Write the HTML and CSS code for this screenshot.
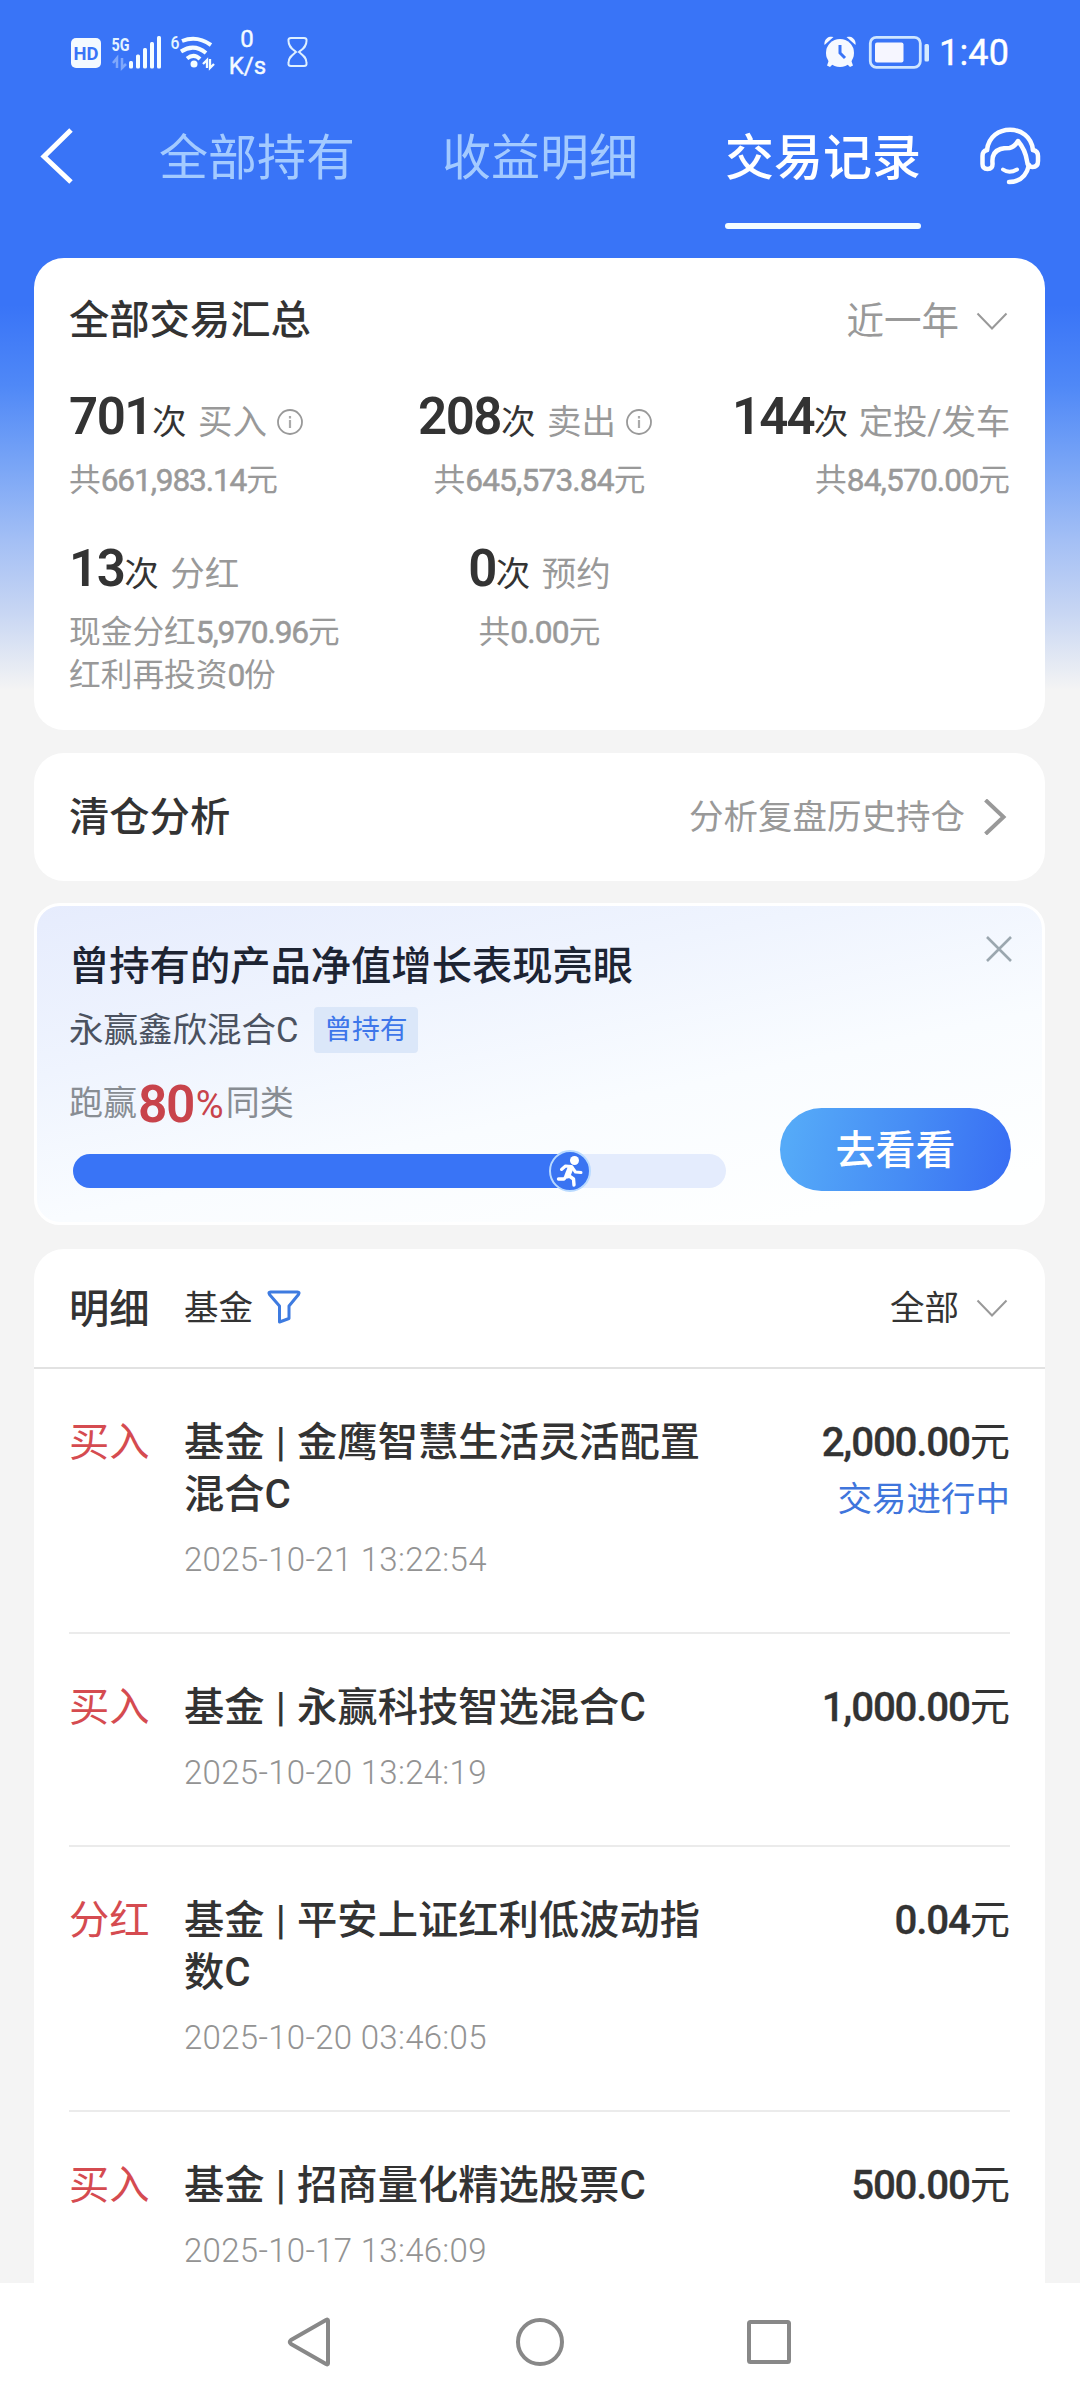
FILE: index.html
```html
<!DOCTYPE html>
<html lang="zh-CN">
<head>
<meta charset="utf-8">
<title>交易记录</title>
<link rel="stylesheet" href="styles.css">
</head>
<body>
<div class="screen">
  <header class="statusbar">
    <svg class="sb-left" viewBox="64 20 256 64" width="256" height="64">
      <rect x="71" y="38" width="30" height="30" rx="5" fill="#f4faff"/>
      <text x="86" y="60" class="t-hd" text-anchor="middle" textLength="25" lengthAdjust="spacingAndGlyphs">HD</text>
      <text x="111.500" y="51" class="t-5g" textLength="18" lengthAdjust="spacingAndGlyphs">5G</text>
      <path d="M113 63l4-5v10M122 58v10l4-4" fill="none" stroke="#7fa8fb" stroke-width="2.500"/>
      <g fill="#f4fdff">
        <rect x="129" y="61" width="4" height="7.500" rx="1.500"/>
        <rect x="136" y="54.500" width="4" height="14" rx="1.500"/>
        <rect x="143" y="48" width="4" height="20.500" rx="1.500"/>
        <rect x="150" y="42" width="4" height="26.500" rx="1.500"/>
        <rect x="157" y="36" width="4" height="32.500" rx="1.500"/>
      </g>
      <text x="170.500" y="49" class="t-6" textLength="9" lengthAdjust="spacingAndGlyphs">6</text>
      <g fill="none" stroke="#f4fdff" stroke-width="4">
        <path d="M182 41Q197 35 211 45"/>
        <path d="M181 51.500Q194 43 206 53"/>
        <path d="M187 58.500Q194 53 200 59"/>
        <path d="M203 64l4-4v8M210 59v9l4-4" stroke-width="2.300"/>
      </g>
      <circle cx="194" cy="64" r="3.500" fill="#f4fdff"/>
      <text x="247" y="47" class="t-net" text-anchor="middle">0</text>
      <text x="247.500" y="73.500" class="t-net" text-anchor="middle">K/s</text>
      <path d="M291 38h13q3 0 2.500 3c0 6-4 8-7.500 11 3.500 3 7.500 5 7.500 11q.5 3-2.500 3h-13q-3 0-2.500-3c0-6 4-8 7.500-11-3.500-3-7.500-5-7.500-11q-.5-3 2.500-3z" fill="none" stroke="#dff0ff" stroke-width="2"/>
    </svg>
    <svg class="sb-right" viewBox="820 20 192 64" width="192" height="64">
      <g fill="#f6f9ff">
        <circle cx="840" cy="53" r="14"/>
        <path d="M824.500 45a7 7 0 0 1 9-8z M855.500 45a7 7 0 0 0-9-8z"/>
        <path d="M829 60l5 3-4 4-3-1.500z M851 60l-5 3 4 4 3-1.500z"/>
      </g>
      <path d="M840 45v8l5 5" fill="none" stroke="#3974f7" stroke-width="3"/>
      <rect x="870.300" y="37.300" width="50" height="30" rx="6" fill="none" stroke="#cfe6ff" stroke-width="2.800"/>
      <rect x="875" y="42.500" width="28.500" height="20" rx="2" fill="#f6f6ff"/>
      <rect x="924.500" y="44" width="4.500" height="17.500" rx="1.500" fill="#d5eaff"/>
      <text x="939" y="65" class="t-clock" textLength="70">1:40</text>
    </svg>
  </header>

  <nav class="tabs">
    <svg class="back" viewBox="0 0 34 56" width="34" height="56"><path d="M31 2L4 28.500 31 54" fill="none" stroke="#fff" stroke-width="5"/></svg>
    <a class="tab">全部持有</a>
    <a class="tab">收益明细</a>
    <a class="tab active">交易记录</a>
    <svg class="service" viewBox="980 126 62 60" width="62" height="60">
      <g fill="none" stroke="#fbfdff" stroke-width="4.500" stroke-linecap="round" stroke-linejoin="round">
        <path d="M988 150C991 123 1031 123 1034 150"/>
        <path d="M988 150q-4.500 1-4.500 6v8q0 5 5 5 5.500 0 5-6-1-11 8-14 3-1 9-1 5-1 8.500-7 7.500 9 9 20 .5 6 5.500 6 5.500 0 5.500-6v-5q0-5-5-6"/>
        <path d="M1030 165Q1026 182 1010 182"/>
        <path d="M1004 169.500q6 4.500 14 0" stroke-width="4"/>
      </g>
    </svg>
  </nav>

  <main class="content">
    <section class="card summary">
      <div class="card-head">
        <h2>全部交易汇总</h2>
        <div class="range">近一年<svg class="chev" viewBox="0 0 32 20" width="32" height="20"><path d="M1.500 1.500L16 16.500 30.500 1.500" fill="none" stroke="#999" stroke-width="2"/></svg></div>
      </div>
      <div class="stats">
        <div class="stat">
          <p class="main"><b>701</b><i>次</i><span>买入</span><svg class="info" viewBox="0 0 26 26" width="26" height="26"><circle cx="13" cy="13" r="12" fill="none" stroke="#999" stroke-width="1.800"/><path d="M13 11v8M13 7v2.500" stroke="#aaa" stroke-width="2.200"/></svg></p>
          <p class="sub">共<b>661,983.14</b>元</p>
        </div>
        <div class="stat center">
          <p class="main"><b>208</b><i>次</i><span>卖出</span><svg class="info pad" viewBox="0 0 26 26" width="26" height="26"><circle cx="13" cy="13" r="12" fill="none" stroke="#999" stroke-width="1.800"/><path d="M13 11v8M13 7v2.500" stroke="#aaa" stroke-width="2.200"/></svg></p>
          <p class="sub">共<b>645,573.84</b>元</p>
        </div>
        <div class="stat right">
          <p class="main"><b>144</b><i>次</i><span>定投/发车</span></p>
          <p class="sub">共<b>84,570.00</b>元</p>
        </div>
        <div class="stat">
          <p class="main"><b>13</b><i>次</i><span>分红</span></p>
          <p class="sub">现金分红<b>5,970.96</b>元</p>
          <p class="sub next">红利再投资<b>0</b>份</p>
        </div>
        <div class="stat center">
          <p class="main"><b>0</b><i>次</i><span>预约</span></p>
          <p class="sub">共<b>0.00</b>元</p>
        </div>
      </div>
    </section>

    <section class="card analysis">
      <h2>清仓分析</h2>
      <div class="link">分析复盘历史持仓<svg viewBox="0 0 24 36" width="24" height="36"><path d="M2.500 1L20.500 18 2.500 35" fill="none" stroke="#999" stroke-width="4"/></svg></div>
    </section>

    <section class="card promo">
      <div class="promo-top">
        <h2>曾持有的产品净值增长表现亮眼</h2>
        <svg class="close" viewBox="0 0 26 26" width="26" height="26"><path d="M1 1l24 24M25 1L1 25" stroke="#9ba7af" stroke-width="2.600"/></svg>
      </div>
      <div class="fund"><span>永赢鑫欣混合C</span><em>曾持有</em></div>
      <div class="promo-body">
        <div class="rank">
          <p>跑赢<b>80</b><i>%</i>同类</p>
          <div class="track">
            <div class="fill" style="width:76%"></div>
            <svg class="runner" viewBox="0 0 42 42" width="42" height="42">
              <circle cx="21" cy="21" r="20" fill="#3a74f2" stroke="#b9daff" stroke-width="2"/>
              <circle cx="25.500" cy="10.500" r="4.500" fill="#fff"/>
              <g fill="none" stroke="#fff" stroke-linecap="round" stroke-linejoin="round"><path d="M12.500 19.500l4-3.500 6 .5 4 5.500 5.500.5" stroke-width="3"/><path d="M21.500 18l-3 7.500" stroke-width="6"/><path d="M18 25.500l-3 3.500H9.500M19.500 25.500l5 3.500 .5 6" stroke-width="3.400"/></g>
            </svg>
          </div>
        </div>
        <a class="go">去看看</a>
      </div>
    </section>

    <section class="card detail">
      <div class="detail-head">
        <h2>明细</h2>
        <span class="type">基金</span>
        <svg class="filter" viewBox="0 0 34 34" width="34" height="34"><path d="M3.500 2h27q2.500 0 1 2.500L22 16v12.500L12.500 32V16L2.500 4.500Q1 2 3.500 2z" fill="none" stroke="#3e7be0" stroke-width="3" stroke-linejoin="round"/></svg>
        <div class="all"><span>全部</span><svg class="chev" viewBox="0 0 32 20" width="32" height="20"><path d="M1.500 1.500L16 16.500 30.500 1.500" fill="none" stroke="#999" stroke-width="2"/></svg></div>
      </div>
      <ul class="list">
        <li>
          <span class="kind">买入</span>
          <div class="info-col"><p class="name">基金 | 金鹰智慧生活灵活配置混合C</p><p class="date">2025-10-21 13:22:54</p></div>
          <div class="money"><p class="amt"><b>2,000.00</b>元</p><p class="state">交易进行中</p></div>
        </li>
        <li>
          <span class="kind">买入</span>
          <div class="info-col"><p class="name">基金 | 永赢科技智选混合C</p><p class="date">2025-10-20 13:24:19</p></div>
          <div class="money"><p class="amt"><b>1,000.00</b>元</p></div>
        </li>
        <li>
          <span class="kind">分红</span>
          <div class="info-col"><p class="name">基金 | 平安上证红利低波动指数C</p><p class="date">2025-10-20 03:46:05</p></div>
          <div class="money"><p class="amt"><b>0.04</b>元</p></div>
        </li>
        <li>
          <span class="kind">买入</span>
          <div class="info-col"><p class="name">基金 | 招商量化精选股票C</p><p class="date">2025-10-17 13:46:09</p></div>
          <div class="money"><p class="amt"><b>500.00</b>元</p></div>
        </li>
      </ul>
    </section>
  </main>

  <footer class="sysnav">
    <svg viewBox="0 0 48 52" width="48" height="52"><path d="M42 4.500v43q0 1.500-2 .5L5 28q-2.500-2 0-4L40 4q2-1 2 .5z" fill="none" stroke="#888" stroke-width="4" stroke-linejoin="round"/></svg>
    <svg viewBox="0 0 52 52" width="52" height="52"><circle cx="26" cy="26" r="22" fill="none" stroke="#888" stroke-width="4"/></svg>
    <svg viewBox="0 0 48 52" width="48" height="52"><rect x="3" y="6" width="40" height="40" rx="1.500" fill="none" stroke="#888" stroke-width="4"/></svg>
  </footer>
</div>
</body>
</html>
```
FILE: styles.css
```css
* { box-sizing: border-box; margin: 0; padding: 0; }
body {
  width: 1080px;
  font-family: Roboto, "Noto Sans CJK SC", sans-serif;
  color: #333;
  background: #f4f4f4;
}
svg { display: block; flex: none; }
b, i, em, h2 { font-style: normal; font-weight: 500; }

.screen {
  display: flex;
  flex-direction: column;
  height: 2400px;
  overflow: hidden;
  background: linear-gradient(180deg, #3974f7 0, #3974f7 305px, #4f88f7 385px, #76a3f6 460px, #a3bff5 540px, #c6d5f3 610px, #f4f4f4 690px, #f4f4f4 100%);
}

/* system status bar */
.statusbar {
  flex: none;
  height: 104px;
  padding: 20px 68px 20px 64px;
  display: flex;
  justify-content: space-between;
}
.t-hd { font: 700 18px Roboto, sans-serif; fill: #3974f7; }
.t-5g { font: 700 19px Roboto, sans-serif; fill: #e4f4ff; }
.t-6 { font: 500 18px Roboto, sans-serif; fill: #e4f4ff; }
.t-net { font: 400 24px Roboto, sans-serif; fill: #f4fbff; stroke: #f4fbff; stroke-width: .4; }
.t-clock { font: 400 36px Roboto, sans-serif; fill: #fff; stroke: #fff; stroke-width: .4; }

/* page tabs */
.tabs {
  flex: none;
  height: 154px;
  display: flex;
  align-items: flex-start;
  padding: 23px 36px 0 40px;
}
.back { margin: 1px 85px 0 0; }
.tab {
  position: relative;
  width: 196px;
  margin-right: 87px;
  height: 103px;
  line-height: 64px;
  font-size: 49px;
  white-space: nowrap;
  color: #a3caff;
}
.tab.active { color: #fff; font-weight: 500; margin-right: 57.500px; }
.service { margin-top: -1px; }
.tab.active::after {
  content: "";
  position: absolute;
  left: 0;
  right: 0;
  bottom: 1px;
  height: 6px;
  border-radius: 3px;
  background: #f4fdff;
}

.content {
  flex: 1;
  min-height: 0;
  overflow: hidden;
  padding: 0 35px 0 34px;
  display: flex;
  flex-direction: column;
}
.card { flex: none; background: #fff; border-radius: 30px; }
h2 { font-size: 40.300px; line-height: 52px; white-space: nowrap; }

/* summary */
.summary { height: 472px; padding: 37px 35px 0; }
.card-head { display: flex; justify-content: space-between; align-items: center; height: 52px; }
.range { display: flex; align-items: center; font-size: 37.500px; line-height: 52px; color: #999; }
.range .chev { margin: 1px 2px 0 17px; }
.stats {
  display: grid;
  grid-template-columns: repeat(3, 1fr);
  row-gap: 41px;
  margin-top: 44px;
}
.stat { display: flex; flex-direction: column; align-items: flex-start; }
.stat.center { align-items: center; }
.stat.right { align-items: flex-end; }
.main { display: flex; align-items: baseline; height: 52px; white-space: nowrap; }
.main b { font-size: 51px; line-height: 52px; font-weight: 600; letter-spacing: -1.500px; }
.main i, .main span { font-size: 34.500px; line-height: 36px; font-weight: 400; }
.stat.right .main b { letter-spacing: -1.900px; }
.stat.right .main span { margin-left: 10.500px; letter-spacing: -.200px; }
.main span { margin-left: 11.500px; color: #999; }
.info { align-self: flex-start; margin: 18px 0 0 10px; }
.info.pad { margin-right: 9px; }
.sub {
  margin-top: 16px;
  font-size: 31.700px;
  line-height: 43px;
  color: #999;
  white-space: nowrap;
}
.sub b { letter-spacing: -1.150px; font-weight: 400; -webkit-text-stroke: .5px #999; }
.stat.center .sub b, .stat.right .sub b { letter-spacing: -.850px; }
.sub.next { margin-top: 0; }

/* liquidation analysis */
.analysis {
  height: 128px;
  margin-top: 22.500px;
  padding: 0 38px 0 35px;
  display: flex;
  align-items: center;
  justify-content: space-between;
}
.analysis h2 { padding-top: 2px; }
.link { display: flex; align-items: center; gap: 18px; font-size: 34.500px; line-height: 44px; color: #999; }

/* promo */
.promo {
  height: 322px;
  margin-top: 22.500px;
  padding: 35px 31px 0 32px;
  border: 3px solid #fff;
  border-radius: 26px;
  background: linear-gradient(168deg, #e6ecfd 0%, #eff4fe 32%, #f9fcff 60%, #feffff 90%);
}
.promo-top { display: flex; justify-content: space-between; }
.promo h2 { color: #1d2433; }
.close { margin: -5px -1px 0 0; }
.fund { display: flex; align-items: center; height: 46px; margin-top: 14px; font-size: 34.500px; line-height: 46px; color: #4b5260; }
.fund em {
  margin-left: 16px;
  padding-right: 1px;
  width: 104px;
  height: 46px;
  line-height: 45px;
  border-radius: 4px;
  background: #dbe7f9;
  color: #3d76ea;
  font-size: 27.800px;
  font-weight: 400;
  text-align: center;
}
.promo-body { display: flex; justify-content: space-between; }
.rank p { margin-top: 24px; height: 52px; line-height: 52px; font-size: 34px; color: #888d93; white-space: nowrap; }
.rank b { margin-left: 1px; font-size: 51.500px; line-height: 20px; font-weight: 600; letter-spacing: -1.500px; color: #c8434b; vertical-align: -7px; }
.rank i { margin-left: 2px; font-size: 38px; line-height: 20px; font-weight: 400; letter-spacing: 2px; color: #c8434b; vertical-align: -3px; }
.track { position: relative; width: 653px; height: 34px; margin: 25px 0 0 4px; border-radius: 17px; background: #e4ecfd; }
.fill { height: 34px; border-radius: 17px 0 0 17px; background: #3974f6; }
.runner { position: absolute; left: 476px; top: -4px; }
.go {
  width: 231px;
  height: 83px;
  margin-top: 55px;
  border-radius: 42px;
  background: linear-gradient(100deg, #55aaf8 5%, #468cf5 55%, #386df3 100%);
  color: #fff;
  font-size: 40px;
  font-weight: 500;
  line-height: 86px;
  text-align: center;
}

/* details */
.detail { height: 1200px; margin-top: 24px; }
.detail-head { display: flex; align-items: center; height: 120px; padding: 0 37px 0 35px; border-bottom: 2px solid #e2e2e2; }
.detail-head h2 { padding-top: 4px; }
.type, .all span { font-size: 34.500px; line-height: 44px; margin-top: 0; }
.type { margin-left: 34.500px; }
.filter { margin: -2px 0 0 14px; }
.all { display: flex; align-items: center; margin-left: auto; }
.all .chev { margin: 2px 0 0 17px; }
.list { list-style: none; padding: 0 35px; }
.list li { display: flex; padding: 48px 0 50px; border-bottom: 2px solid #ebebeb; font-size: 40.300px; line-height: 52px; }
.kind { width: 115px; color: #d54b50; }
.info-col { width: 525px; font-weight: 500; }
.name { word-spacing: 1.200px; }
.date { margin-top: 17px; height: 44px; line-height: 44px; font-size: 33px; font-weight: 350; letter-spacing: .300px; color: #939393; white-space: nowrap; }
.money { flex: 1; text-align: right; white-space: nowrap; }
.amt b { letter-spacing: -1.200px; font-weight: 500; -webkit-text-stroke: .3px #333; }
.state { margin-top: 8px; font-size: 34.500px; line-height: 44px; color: #3f75dc; }

.sysnav {
  flex: none;
  height: 117px;
  display: flex;
  justify-content: center;
  gap: 180px;
  padding-top: 33px;
  background: #fff;
}
```
